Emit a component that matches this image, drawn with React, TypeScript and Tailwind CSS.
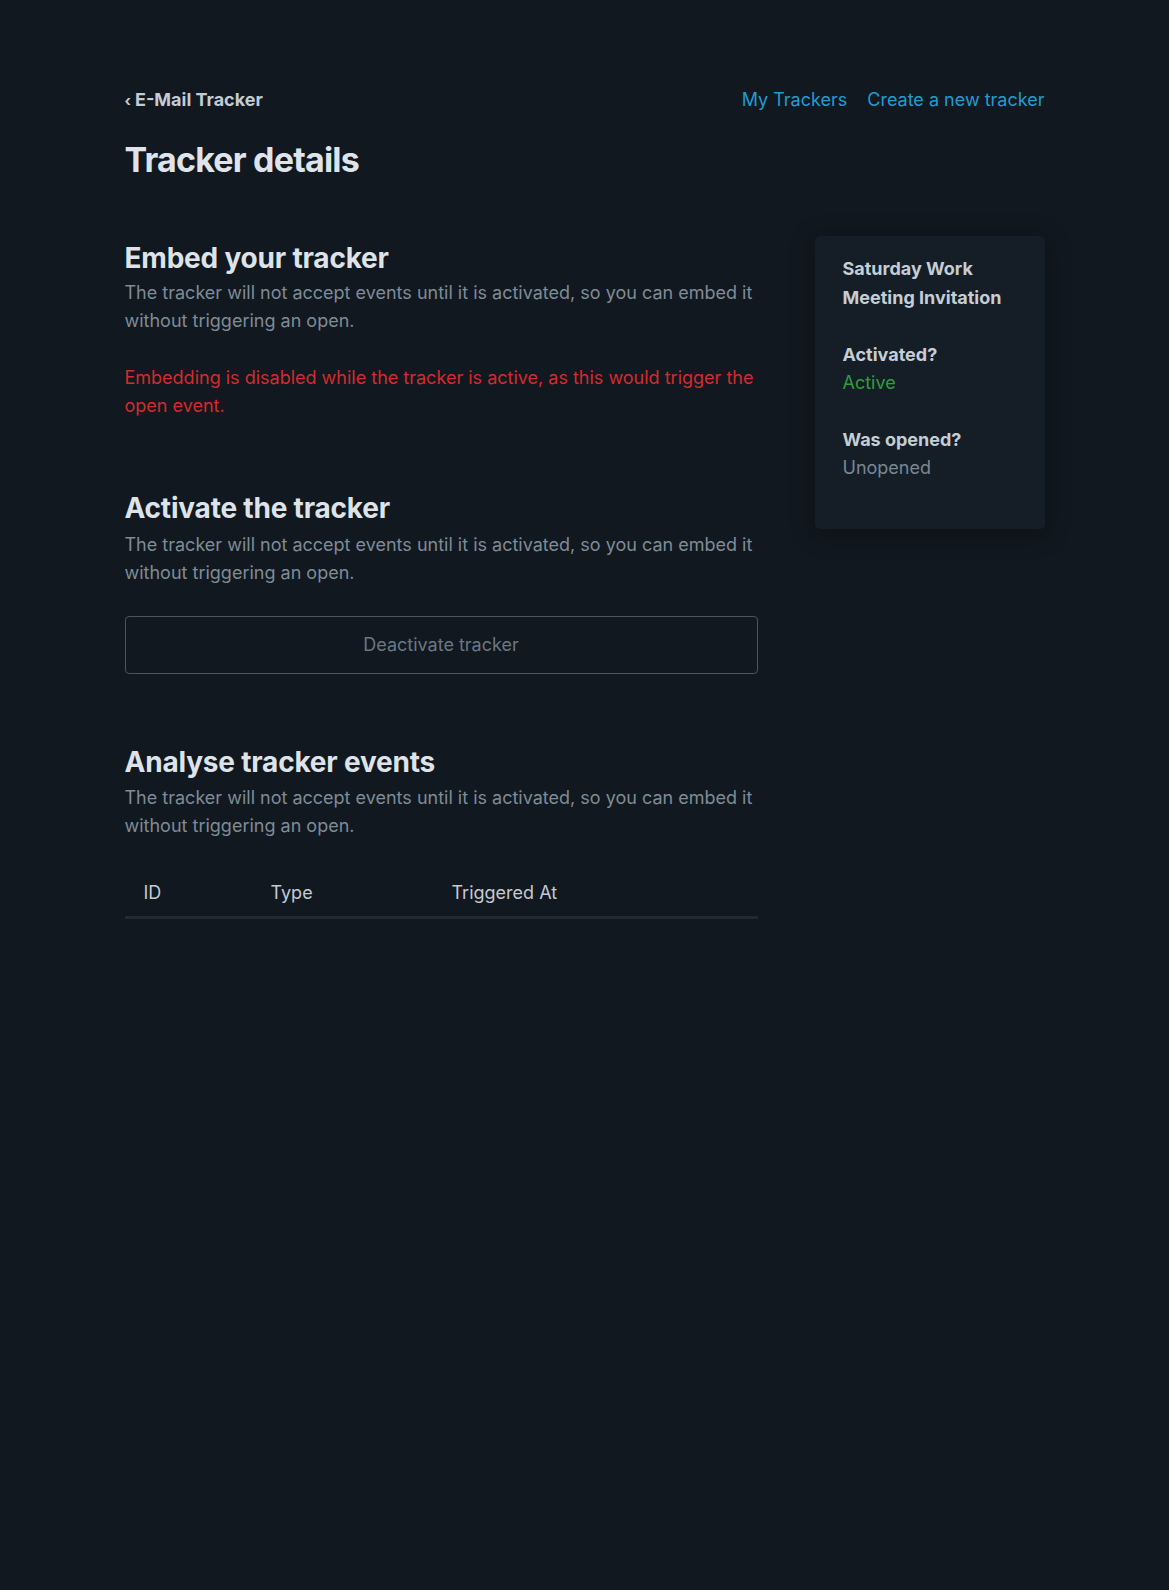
export default function App() {
  return (
    <div className="min-h-[1590px] bg-[#11181f] font-['Inter',sans-serif] text-[18px] leading-[28px]">
      <div className="mx-auto w-[920px] pt-[86px]">
        <header className="flex items-baseline justify-between">
          <a href="#" className="flex items-baseline font-bold text-[#c3cbd3]">
            <span className="mr-[4px] text-[15px]">‹</span>
            E-Mail Tracker
          </a>
          <nav className="flex gap-[20px] text-[#1f9cd2]">
            <a href="#">My Trackers</a>
            <a href="#">Create a new tracker</a>
          </nav>
        </header>

        <h1 className="mt-[25px] text-[34px] font-bold leading-[40px] tracking-[-0.8px] text-[#dfe4ea]">
          Tracker details
        </h1>

        <div className="mt-[56px] flex justify-between">
          <main className="w-[633px] pt-[5px]">
            <section>
              <h2 className="text-[28px] font-bold leading-[34px] tracking-[-0.2px] text-[#dde3e9]">Embed your tracker</h2>
              <p className="mt-[4px] text-[#7f8b97]">
                The tracker will not accept events until it is activated, so you can embed it without triggering an open.
              </p>
              <p className="mt-[29px] text-[#d42b2b]">
                Embedding is disabled while the tracker is active, as this would trigger the open event.
              </p>
            </section>

            <section className="mt-[71px]">
              <h2 className="text-[28px] font-bold leading-[34px] tracking-[-0.2px] text-[#dde3e9]">Activate the tracker</h2>
              <p className="mt-[6px] text-[#7f8b97]">
                The tracker will not accept events until it is activated, so you can embed it without triggering an open.
              </p>
              <button className="mt-[29px] h-[58px] w-full rounded-[4px] border border-[#4b5561] text-[#6b7784]">
                Deactivate tracker
              </button>
            </section>

            <section className="mt-[71px]">
              <h2 className="text-[28px] font-bold leading-[34px] tracking-[-0.2px] text-[#dde3e9]">Analyse tracker events</h2>
              <p className="mt-[5px] text-[#7f8b97]">
                The tracker will not accept events until it is activated, so you can embed it without triggering an open.
              </p>
              <table className="mt-[28px] w-full text-left">
                <thead>
                  <tr className="border-b-[3px] border-[#1f2a33] text-[#c3cad1]">
                    <th className="w-[127px] pl-[19px] pt-[11px] pb-[9px] font-normal">ID</th>
                    <th className="w-[181px] pl-[19px] pt-[11px] pb-[9px] font-normal">Type</th>
                    <th className="pl-[19px] pt-[11px] pb-[9px] font-normal">Triggered At</th>
                  </tr>
                </thead>
                <tbody></tbody>
              </table>
            </section>
          </main>

          <aside className="h-fit w-[230px] rounded-[5px] bg-[#151e27] px-[28px] pt-[18px] pb-[47px] shadow-[0_4px_24px_rgba(0,0,0,0.35)]">
            <h3 className="font-bold leading-[29px] text-[#c5cdd5]">Saturday Work Meeting Invitation</h3>
            <dl>
              <dt className="mt-[29px] font-bold text-[#c5cdd5]">Activated?</dt>
              <dd className="text-[#2f9e3d]">Active</dd>
              <dt className="mt-[29px] font-bold text-[#c5cdd5]">Was opened?</dt>
              <dd className="text-[#7b8793]">Unopened</dd>
            </dl>
          </aside>
        </div>
      </div>
    </div>
  )
}
